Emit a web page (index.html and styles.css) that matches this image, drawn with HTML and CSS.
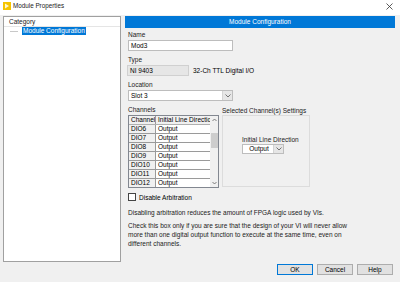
FILE: index.html
```html
<!DOCTYPE html>
<html lang="en">
<head>
    <meta charset="UTF-8">
    <title>Module Properties</title>
    <link rel="stylesheet" href="styles.css">
</head>
<body>
    <div class="titlebar">
        <svg class="app-icon" width="8" height="8" viewBox="0 0 8 8">
            <rect width="8" height="8" fill="#f5c400"/>
            <path d="M2 1.5 L6 4 L2 6.5 Z" fill="#fff7d0"/>
        </svg>
        <span class="title">Module Properties</span>
        <svg class="close" width="7" height="7" viewBox="0 0 7 7">
            <path d="M0.5 0.5 L6.5 6.5 M6.5 0.5 L0.5 6.5" stroke="#333" stroke-width="0.8"/>
        </svg>
    </div>

    <div class="window">
        <div class="tree">
            <div class="tree-head">Category</div>
            <div class="tree-item">
                <span class="branch"></span>
                <span class="selected">Module Configuration</span>
            </div>
        </div>

        <div class="config">
            <div class="banner">Module Configuration</div>
            <div class="form">
                <div class="field">
                    <div class="label">Name</div>
                    <div class="textbox">Mod3</div>
                </div>
                <div class="field">
                    <div class="label">Type</div>
                    <div class="type-row">
                        <div class="textbox readonly">NI 9403</div>
                        <span>32-Ch TTL Digital I/O</span>
                    </div>
                </div>
                <div class="field">
                    <div class="label">Location</div>
                    <div class="select wide">
                        <span class="select-text">Slot 3</span>
                        <span class="drop"><svg width="6" height="4" viewBox="0 0 6 4"><path d="M0.5 0.5 L3 3 L5.5 0.5" fill="none" stroke="#555" stroke-width="0.8"/></svg></span>
                    </div>
                </div>

                <div class="channel-area">
                    <div class="channels">
                        <div class="label">Channels</div>
                        <div class="grid">
                            <div class="cells">
                                <div class="row head"><div class="ch">Channel</div><div class="dir">Initial Line Directio</div></div>
                                <div class="row"><div class="ch">DIO6</div><div class="dir">Output</div></div>
                                <div class="row"><div class="ch">DIO7</div><div class="dir">Output</div></div>
                                <div class="row"><div class="ch">DIO8</div><div class="dir">Output</div></div>
                                <div class="row"><div class="ch">DIO9</div><div class="dir">Output</div></div>
                                <div class="row"><div class="ch">DIO10</div><div class="dir">Output</div></div>
                                <div class="row"><div class="ch">DIO11</div><div class="dir">Output</div></div>
                                <div class="row"><div class="ch">DIO12</div><div class="dir">Output</div></div>
                            </div>
                            <div class="scrollbar">
                                <svg width="5" height="4" viewBox="0 0 5 4"><path d="M0.5 3 L2.5 1 L4.5 3" fill="none" stroke="#606060" stroke-width="0.8"/></svg>
                                <div class="thumb"></div>
                                <svg class="down" width="5" height="4" viewBox="0 0 5 4"><path d="M0.5 1 L2.5 3 L4.5 1" fill="none" stroke="#606060" stroke-width="0.8"/></svg>
                            </div>
                        </div>
                    </div>

                    <div class="settings">
                        <div class="label">Selected Channel(s) Settings</div>
                        <div class="group">
                            <div class="group-inner">
                                <div class="label">Initial Line Direction</div>
                                <div class="select small">
                                    <span class="select-text center">Output</span>
                                    <span class="drop"><svg width="6" height="4" viewBox="0 0 6 4"><path d="M0.5 0.5 L3 3 L5.5 0.5" fill="none" stroke="#555" stroke-width="0.8"/></svg></span>
                                </div>
                            </div>
                        </div>
                    </div>
                </div>

                <label class="check-row">
                    <span class="checkbox"></span>
                    <span>Disable Arbitration</span>
                </label>

                <p class="note">Disabling arbitration reduces the amount of FPGA logic used by VIs.</p>
                <p class="note second">Check this box only if you are sure that the design of your VI will never allow<br>more than one digital output function to execute at the same time, even on<br>different channels.</p>

                <div class="buttons">
                    <button class="btn default">OK</button>
                    <button class="btn">Cancel</button>
                    <button class="btn">Help</button>
                </div>
            </div>
        </div>
    </div>
</body>
</html>
```

FILE: styles.css
```css
body {
    margin: 0;
    padding: 0;
    width: 400px;
    height: 282px;
    overflow: hidden;
    background: #f0f0f0;
    font-family: "Liberation Sans", Arial, sans-serif;
    font-size: 6.5px;
    color: #000;
}
.titlebar {
    height: 15px;
    background: #fff;
    display: flex;
    align-items: flex-start;
    padding: 2px 7px 0 3px;
    box-sizing: border-box;
}
.app-icon {
    margin-right: 2px;
}
.title {
    font-size: 6.3px;
    line-height: 8px;
    color: #222;
}
.close {
    margin-left: auto;
    margin-top: 1px;
}
.window {
    display: flex;
    padding: 1px 5px 0 3px;
    gap: 4px;
}
.tree {
    width: 118px;
    height: 246px;
    box-sizing: border-box;
    border: 1px solid #a0a0a0;
    background: #fff;
}
.tree-head {
    height: 9px;
    line-height: 9px;
    padding-left: 5px;
    border-bottom: 1px solid #e5e5e5;
    color: #222;
}
.tree-item {
    display: flex;
    align-items: center;
    height: 8px;
}
.branch {
    width: 8px;
    margin-left: 6px;
    margin-right: 4px;
    border-top: 1px solid #c8c8c8;
}
.selected {
    background: #0078d7;
    color: #fff;
    line-height: 8px;
    padding: 0 1px;
}
.config {
    width: 270px;
}
.banner {
    height: 12px;
    line-height: 12px;
    background: #0078d7;
    color: #fff;
    text-align: center;
}
.form {
    padding: 2px 2px 0 3px;
}
.field {
    margin-bottom: 4px;
}
.label {
    height: 9px;
    line-height: 9px;
    margin-bottom: 1px;
    color: #222;
    white-space: nowrap;
}
.textbox {
    width: 105px;
    height: 11px;
    line-height: 9px;
    box-sizing: border-box;
    border: 1px solid #bdbdbd;
    background: #fff;
    padding-left: 2px;
}
.textbox.readonly {
    width: 62px;
    background: #e6e6e6;
    border-color: #d0d0d0;
    margin-left: -1px;
}
.type-row {
    display: flex;
    align-items: center;
    gap: 4px;
}
.select {
    display: flex;
    height: 11px;
    box-sizing: border-box;
    border: 1px solid #bdbdbd;
    background: #fff;
}
.select.wide {
    width: 105px;
}
.select.small {
    width: 42px;
    height: 10px;
}
.select-text {
    flex: 1;
    line-height: 9px;
    padding-left: 2px;
}
.select-text.center {
    text-align: center;
    line-height: 8px;
}
.drop {
    width: 9px;
    background: #e6e6e6;
    border-left: 1px solid #d4d4d4;
    display: flex;
    align-items: center;
    justify-content: center;
}
.channel-area {
    display: flex;
    gap: 3px;
}
.channels {
    width: 91px;
}
.grid {
    display: flex;
    height: 73px;
    box-sizing: border-box;
    border: 1px solid #828790;
    background: #fff;
}
.cells {
    flex: 1;
    overflow: hidden;
}
.row {
    display: flex;
    height: 9px;
    line-height: 8px;
    border-bottom: 1px solid #9a9a9a;
    box-sizing: border-box;
}
.row .ch {
    width: 27px;
    padding-left: 2px;
    box-sizing: border-box;
    background: #f0f0f0;
    border-right: 1px solid #9a9a9a;
    white-space: nowrap;
    overflow: hidden;
}
.row .dir {
    flex: 1;
    padding-left: 2px;
    white-space: nowrap;
    overflow: hidden;
}
.row.head {
    border-bottom-color: #b0b0b0;
}
.row.head .dir {
    background: #f0f0f0;
}
.scrollbar {
    width: 8px;
    background: #f0f0f0;
    display: flex;
    flex-direction: column;
    align-items: center;
    padding-top: 2px;
    box-sizing: border-box;
}
.thumb {
    width: 7px;
    height: 15px;
    margin-top: 11px;
    background: #cdcdcd;
}
.scrollbar .down {
    margin-top: auto;
    margin-bottom: 2px;
}
.settings {
    width: 88px;
}
.settings > .label {
    margin-top: 1px;
    margin-bottom: 0;
}
.group {
    width: 88px;
    height: 72px;
    box-sizing: border-box;
    border: 1px solid #dcdcdc;
    display: flex;
}
.group-inner {
    margin-top: 19px;
    padding-left: 19px;
}
.group-inner .label {
    margin-bottom: 0;
}
.check-row {
    display: flex;
    align-items: center;
    gap: 3px;
    margin-top: 5px;
    height: 8px;
}
.checkbox {
    width: 8px;
    height: 8px;
    box-sizing: border-box;
    border: 1px solid #444;
    background: #fff;
}
.note {
    margin: 7px 0 0;
    line-height: 9px;
    color: #222;
}
.note.second {
    margin-top: 4px;
}
.buttons {
    display: flex;
    justify-content: flex-end;
    gap: 4px;
    margin-top: 16px;
}
.btn {
    width: 36px;
    height: 11px;
    padding: 0;
    font: inherit;
    line-height: 9px;
    background: #e1e1e1;
    border: 1px solid #adadad;
    color: #000;
}
.btn.default {
    border-color: #0078d7;
}
```
